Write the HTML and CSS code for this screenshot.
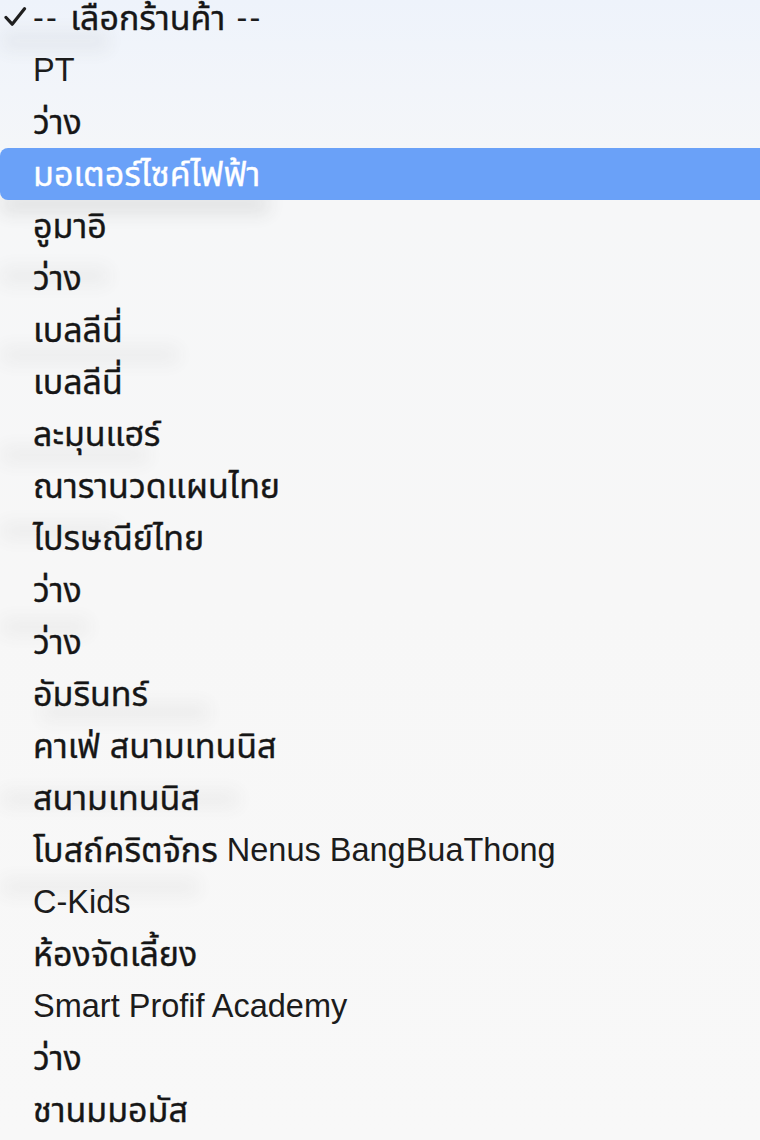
FILE: index.html
```html
<!DOCTYPE html>
<html lang="th">
<head>
<meta charset="utf-8">
<title>เลือกร้านค้า</title>
<link rel="stylesheet" href="styles.css">
</head>
<body>
<div class="screen">
  <div class="backdrop" aria-hidden="true">
    <div class="blob b1"></div>
    <div class="blob b2"></div>
    <div class="blob b3"></div>
    <div class="blob b4"></div>
    <div class="blob b5"></div>
    <div class="blob b6"></div>
    <div class="blob b7"></div>
    <div class="blob b8"></div>
    <div class="blob b9"></div>
    <div class="blob b10"></div>
  </div>
  <div class="menu">
    <ul class="options">
      <li class="option checked"><svg class="check" viewBox="0 0 24 24" width="24" height="24"><path d="M2 11.5 L8.2 18.2 L20.5 2.8" fill="none" stroke="#1f1f1f" stroke-width="3.2" stroke-linecap="round" stroke-linejoin="round"/></svg><span class="lat dash">--&nbsp;</span><span class="th">เลือกร้านค้า</span><span class="lat dash">&nbsp;--</span></li>
      <li class="option"><span class="lat">PT</span></li>
      <li class="option"><span class="th">ว่าง</span></li>
      <li class="option selected"><span class="th">มอเตอร์ไซค์ไฟฟ้า</span></li>
      <li class="option"><span class="th">อูมาอิ</span></li>
      <li class="option"><span class="th">ว่าง</span></li>
      <li class="option"><span class="th">เบลลีนี่</span></li>
      <li class="option"><span class="th">เบลลีนี่</span></li>
      <li class="option"><span class="th">ละมุนแฮร์</span></li>
      <li class="option"><span class="th">ณารานวดแผนไทย</span></li>
      <li class="option"><span class="th">ไปรษณีย์ไทย</span></li>
      <li class="option"><span class="th">ว่าง</span></li>
      <li class="option"><span class="th">ว่าง</span></li>
      <li class="option"><span class="th">อัมรินทร์</span></li>
      <li class="option"><span class="th">คาเฟ่ สนามเทนนิส</span></li>
      <li class="option"><span class="th">สนามเทนนิส</span></li>
      <li class="option"><span class="th">โบสถ์คริตจักร</span><span class="lat">&nbsp;Nenus BangBuaThong</span></li>
      <li class="option"><span class="lat">C-Kids</span></li>
      <li class="option"><span class="th">ห้องจัดเลี้ยง</span></li>
      <li class="option"><span class="lat">Smart Profif Academy</span></li>
      <li class="option"><span class="th">ว่าง</span></li>
      <li class="option"><span class="th">ชานมมอมัส</span></li>
    </ul>
  </div>
</div>
</body>
</html>
```
FILE: styles.css
```css
html, body {
  margin: 0;
  padding: 0;
  height: 100%;
  overflow: hidden;
}
body {
  background: linear-gradient(180deg, #eef3fb 0px, #f2f5fa 90px, #f6f7f8 200px, #f7f7f7 600px, #f8f8f8 1140px);
  font-family: "Liberation Sans", "Noto Sans Thai", "Noto Sans", "DejaVu Sans", sans-serif;
  color: #1c1c1c;
}
.screen {
  display: grid;
  height: 1140px;
  overflow: hidden;
}
.backdrop,
.menu {
  grid-area: 1 / 1;
}
.backdrop {
  display: flex;
  flex-direction: column;
  filter: blur(9px);
  opacity: 0.45;
}
.blob {
  background: rgba(60, 60, 60, 0.12);
  border-radius: 6px;
}
.b1 { margin-top: 30px; height: 22px; width: 110px; }
.b2 { margin-top: 142px; height: 20px; width: 270px; background: rgba(40, 40, 40, 0.22); }
.b3 { margin-top: 52px; height: 20px; width: 110px; }
.b4 { margin-top: 60px; height: 18px; width: 180px; }
.b5 { margin-top: 82px; height: 18px; width: 150px; }
.b6 { margin-top: 58px; height: 18px; width: 120px; }
.b7 { margin-top: 78px; height: 18px; width: 90px; }
.b8 { margin-top: 66px; height: 20px; width: 170px; margin-left: 40px; }
.b9 { margin-top: 68px; height: 18px; width: 240px; }
.b10 { margin-top: 70px; height: 18px; width: 200px; }
.menu {
  width: 100%;
}
.options {
  list-style: none;
  margin: -8px 0 0 0;
  padding: 0;
}
.option {
  height: 52px;
  display: flex;
  align-items: center;
  padding-left: 33px;
  font-size: 32.5px;
  line-height: 1;
  white-space: nowrap;
  position: relative;
}
.lat {
  white-space: pre;
}
.dash {
  letter-spacing: 2.2px;
}
.th {
  font-size: 34px;
  color: #161616;
  -webkit-text-stroke: 0.35px currentColor;
}
.option.checked .check {
  position: absolute;
  left: 4px;
  top: 14px;
}
.option.selected {
  background: #6aa1f8;
  color: #ffffff;
  border-radius: 8px 0 0 8px;
}
.option.selected .th {
  color: #ffffff;
}
```
